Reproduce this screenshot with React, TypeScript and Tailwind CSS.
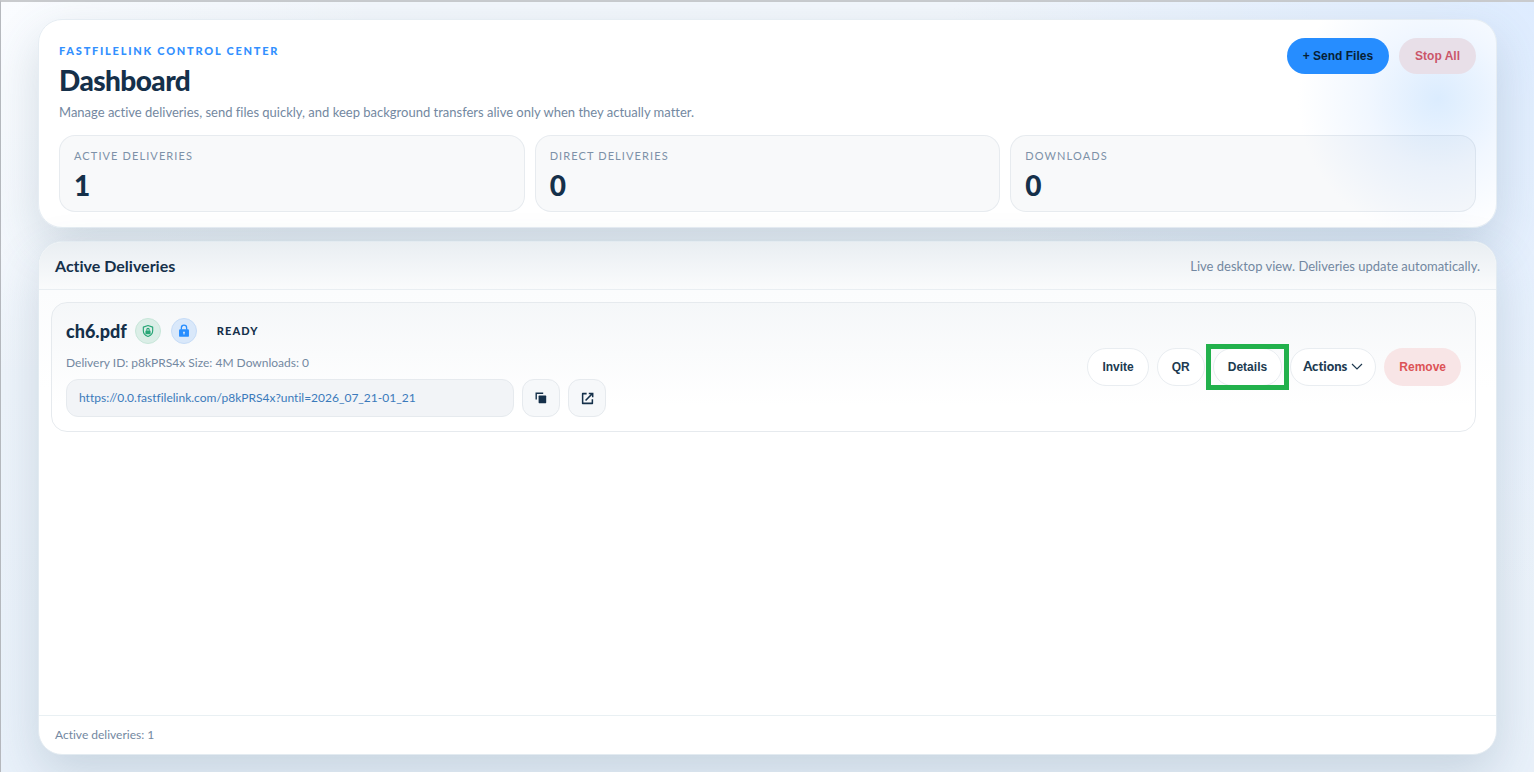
import type { ReactNode } from "react";

const stats = [
  { label: "ACTIVE DELIVERIES", value: 1 },
  { label: "DIRECT DELIVERIES", value: 0 },
  { label: "DOWNLOADS", value: 0 },
];

const sans = "font-['Liberation_Sans',Arial,sans-serif]";

function ShieldIcon() {
  return (
    <svg viewBox="0 0 24 24" className="size-3.5" fill="none" aria-hidden="true">
      <path d="M12 2.6 20 5.4v6.2c0 4.6-3.1 8.2-8 9.9-4.9-1.7-8-5.3-8-9.9V5.4l8-2.8Z" stroke="currentColor" strokeWidth="2" strokeLinejoin="round" />
      <path d="M7.6 11.4h1.5v-2a2.9 2.9 0 0 1 5.8 0v2h1.5v6H7.6v-6Zm3.4 0h2V9.5a1 1 0 0 0-2 0v1.900Z" fill="currentColor" fillRule="evenodd" />
    </svg>
  );
}

function LockIcon() {
  return (
    <svg viewBox="0 0 24 24" className="size-3.5" fill="none" aria-hidden="true">
      <path d="M7.5 10V6.6a4.5 4.5 0 0 1 9 0V10" stroke="currentColor" strokeWidth="2.2" />
      <path d="M5.5 9.2h13a2 2 0 0 1 2 2V20a2 2 0 0 1-2 2h-13a2 2 0 0 1-2-2v-8.8a2 2 0 0 1 2-2ZM12 13a1.7 1.7 0 0 0-.9 3.1V18h1.8v-1.9A1.7 1.7 0 0 0 12 13Z" fill="currentColor" fillRule="evenodd" />
    </svg>
  );
}

function CopyIcon() {
  return (
    <svg viewBox="0 0 12 12" className="size-3" fill="none" aria-hidden="true">
      <path d="M1.2 7.5V1.2h7" stroke="currentColor" strokeWidth="1.4" />
      <rect x="3.6" y="3.6" width="7.6" height="7.6" rx="0.6" fill="currentColor" />
    </svg>
  );
}

function OpenIcon() {
  return (
    <svg viewBox="0 0 12 12" className="size-[13px]" fill="none" stroke="currentColor" strokeWidth="1.4" aria-hidden="true">
      <path d="M5.2 1.5H1.5v9h9V6.8" strokeLinejoin="round" />
      <path d="m4.2 7.8 6.5-6.5M7.2 1.3h3.6v3.6" />
    </svg>
  );
}

function PillButton({ children }: { children: ReactNode }) {
  return (
    <button type="button" className={`${sans} h-[38px] rounded-full border border-[#e9edf1] bg-white px-3.5 text-xs font-bold text-[#203a50]`}>
      {children}
    </button>
  );
}

export default function App() {
  return (
    <div className="flex min-h-screen flex-col border-t-2 border-l border-t-[#c9cbce] border-l-[#b6b9be] bg-[radial-gradient(circle_at_top_left,#fafcff_0%,transparent_22%),radial-gradient(circle_at_top_right,#deecff_0%,transparent_34%),linear-gradient(180deg,#f3f7fc_0%,#e9f1fa_100%)] pt-[17px] pr-[37px] pb-[17px] pl-[37px] font-[Lato,'Noto_Sans',sans-serif] text-[#15304a] [font-variant-ligatures:none]">
      <header className="rounded-3xl border border-[#e6edf3] bg-[radial-gradient(circle_at_96%_38%,#dbecfe_0%,#f1f7ff_70px,#fff_140px)] px-5 pt-[18px] pb-[15px] shadow-[0_18px_48px_rgba(58,94,122,0.20)]">
        <div className="flex items-start justify-between">
          <div>
            <p className="mt-[5px] text-[11px] leading-4 font-black tracking-[0.16em] text-[#3290ff]">FASTFILELINK CONTROL CENTER</p>
            <h1 className="mt-[3px] text-[28px] leading-9 font-black tracking-[-0.02em]">Dashboard</h1>
            <p className="mt-1 text-[13px] leading-5 text-[#7388a1]">
              Manage active deliveries, send files quickly, and keep background transfers alive only when they actually matter.
            </p>
          </div>
          <div className={`${sans} flex gap-2.5 text-xs font-bold`}>
            <button type="button" className="h-9 rounded-full bg-[#268dff] px-4 text-[#071f36]">+ Send Files</button>
            <button type="button" className="h-9 rounded-full bg-[#e8dfe8] px-4 text-[#cb566a]">Stop All</button>
          </div>
        </div>
        <dl className="mt-[13px] grid grid-cols-3 gap-2.5">
          {stats.map((s) => (
            <div key={s.label} className="rounded-2xl border border-[#42648217] bg-[#4264820a] px-3.5 pt-3 pb-2">
              <dt className="text-[11px] leading-4 tracking-[0.1em] text-[#7d91a8]">{s.label}</dt>
              <dd className="mt-[3px] text-[28px] leading-9 font-black">{s.value}</dd>
            </div>
          ))}
        </dl>
      </header>

      <main className="mt-[13px] flex flex-1 flex-col overflow-hidden rounded-3xl border border-[#e3ebf1] bg-white shadow-[0_18px_48px_rgba(58,94,122,0.20)]">
        <div className="flex h-12 items-center justify-between border-b border-[#e9eef2] bg-[linear-gradient(180deg,#e9eef2_0%,#fafbfc_100%)] px-4">
          <h2 className="text-base font-bold">Active Deliveries</h2>
          <p className="text-[13px] leading-6 text-[#7388a1]">Live desktop view. Deliveries update automatically.</p>
        </div>

        <section className="flex-1 bg-[linear-gradient(180deg,#fbfcfd_0px,#fff_100px)] pt-3 pr-5 pl-3">
          <article className="flex items-center justify-between rounded-2xl border border-[#e6eaee] bg-[linear-gradient(180deg,#f5f7f9_0%,#fff_80%)] p-3.5">
            <div>
              <div className="flex h-7 items-center">
                <h3 className="text-lg leading-7 font-black">ch6.pdf</h3>
                <span className="ml-2 flex size-[26px] items-center justify-center rounded-full border border-[#c7e6d9] bg-[#dbeee7] text-[#28a676]">
                  <ShieldIcon />
                </span>
                <span className="ml-2.5 flex size-[26px] items-center justify-center rounded-full border border-[#c6dcf7] bg-[#d9e8fa] text-[#268dff]">
                  <LockIcon />
                </span>
                <span className="ml-5 text-[11px] font-black tracking-[0.1em]">READY</span>
              </div>
              <p className="mt-2 text-xs leading-5 text-[#7388a1]">Delivery ID: p8kPRS4x Size: 4M Downloads: 0</p>
              <div className="mt-1.5 flex gap-2">
                <a href="#delivery" className="flex h-[38px] w-[448px] items-center rounded-xl border border-[#e6eaee] bg-[#f2f4f7] px-3 text-xs text-[#3b7abb]">
                  https://0.0.fastfilelink.com/p8kPRS4x?until=2026_07_21-01_21
                </a>
                <button type="button" aria-label="Copy link" className="flex size-[38px] items-center justify-center rounded-xl border border-[#e6eaee] bg-[#f6f8fa]">
                  <CopyIcon />
                </button>
                <button type="button" aria-label="Open link" className="flex size-[38px] items-center justify-center rounded-xl border border-[#e6eaee] bg-[#f6f8fa]">
                  <OpenIcon />
                </button>
              </div>
            </div>

            <div className="flex items-center gap-2">
              <PillButton>Invite</PillButton>
              <PillButton>QR</PillButton>
              <div className="relative">
                <PillButton>Details</PillButton>
                <div className="pointer-events-none absolute -inset-x-[7px] -inset-y-1 border-5 border-[#22b14c]" />
              </div>
              <button type="button" className="flex h-[38px] items-center gap-1 rounded-full border border-[#e9edf1] bg-white px-3 text-[13px] font-black text-[#203a50]">
                Actions
                <svg viewBox="0 0 12 12" className="size-3" fill="none" stroke="currentColor" strokeWidth="1.2" aria-hidden="true">
                  <path d="m1 3 5 5 5-5" />
                </svg>
              </button>
              <button type="button" className={`${sans} h-[38px] rounded-full bg-[#f8e5e6] px-[15px] text-xs font-bold text-[#dc5356]`}>Remove</button>
            </div>
          </article>
        </section>

        <footer className="flex h-[39px] items-center border-t border-[#e9f0f3] px-4 text-xs text-[#7388a1]">Active deliveries: 1</footer>
      </main>
    </div>
  );
}
